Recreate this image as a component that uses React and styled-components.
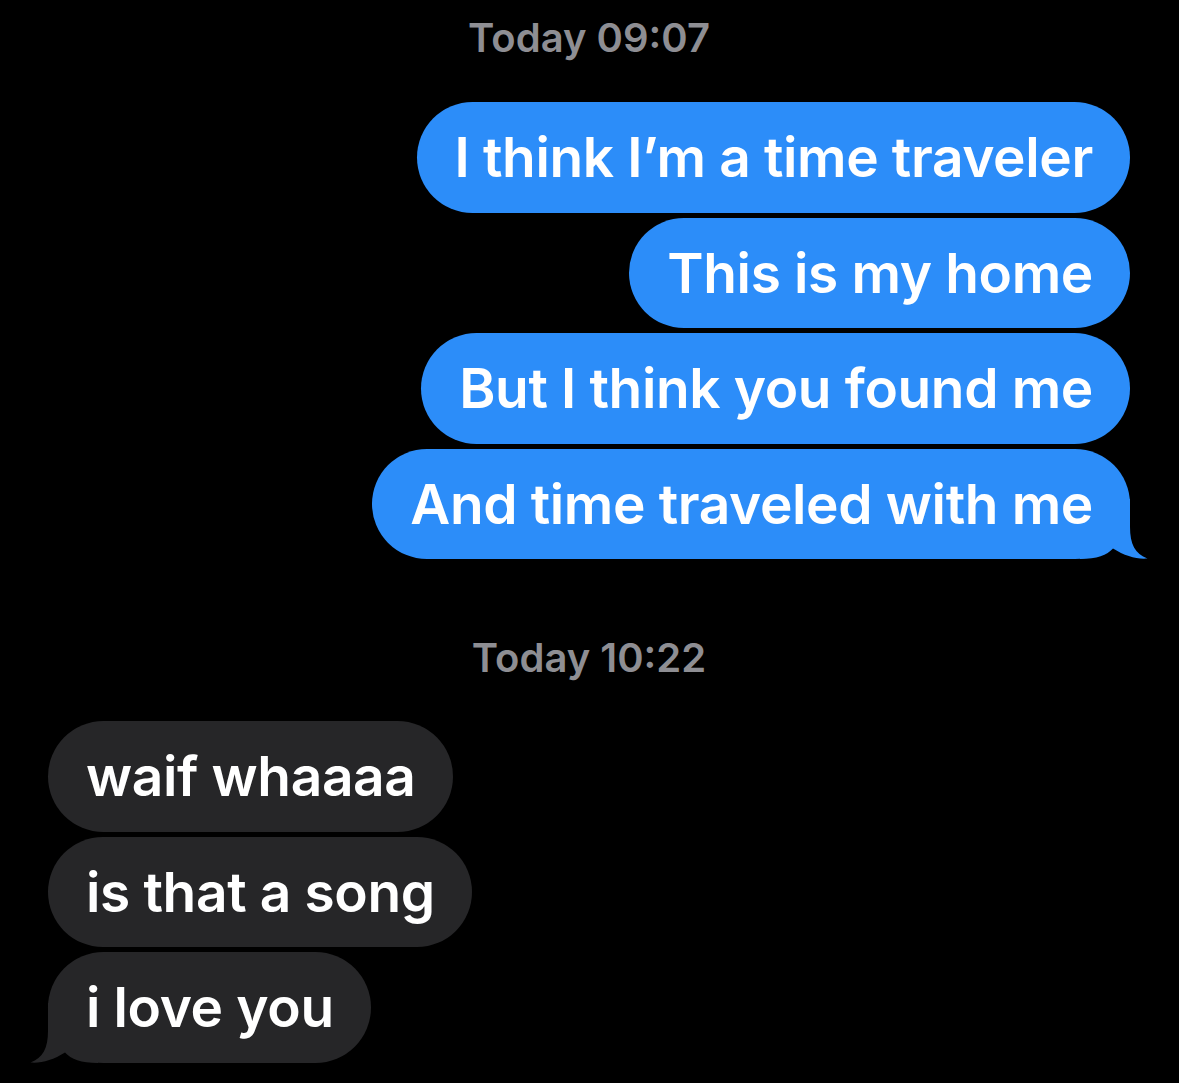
import React from 'react'
import styled, { createGlobalStyle } from 'styled-components'

const Global = createGlobalStyle`
  html, body {
    margin: 0;
    padding: 0;
    background: #000;
  }
  body {
    font-family: Inter, "Noto Sans", sans-serif;
    -webkit-font-smoothing: antialiased;
  }
`

const BLUE = '#2c8df9'
const GRAY = '#262628'

const Page = styled.div`
  width: 1179px;
  height: 1083px;
  background: #000;
  padding: 0 49px 0 48px;
  box-sizing: border-box;
  display: flex;
  flex-direction: column;
  overflow: hidden;
`

const Stamp = styled.div`
  height: 74px;
  margin-top: ${p => p.$top || 0}px;
  display: flex;
  align-items: center;
  justify-content: center;
  color: #8e8e93;
  font-size: 40px;
  font-weight: 600;
`

const Group = styled.div`
  display: flex;
  flex-direction: column;
  align-items: ${p => (p.$mine ? 'flex-end' : 'flex-start')};
  gap: 5px;
  margin-top: ${p => p.$top || 0}px;
`

const Bubble = styled.div`
  position: relative;
  isolation: isolate;
  height: 110.5px;
  box-sizing: border-box;
  padding: 0 37px 0 38px;
  border-radius: 56px;
  display: flex;
  align-items: center;
  background: ${p => (p.$mine ? BLUE : GRAY)};
  color: #fff;
  font-size: 55px;
  font-weight: 600;
  letter-spacing: -0.35px;
  white-space: nowrap;
`

const Tail = styled.svg`
  position: absolute;
  bottom: 0;
  z-index: -1;
  width: 68px;
  height: 60px;
  ${p => (p.$mine ? 'right: -18px;' : 'left: -18px; transform: scaleX(-1);')}
`

function BubbleTail({ mine }) {
  return (
    <Tail $mine={mine} viewBox="0 0 68 60">
      <path
        d="M0 0 H50 V28 C50 45 55 55 67.5 59.5 C57 60.5 45 57 33 49.5 C27 56 17 60 0 60 Z"
        fill={mine ? BLUE : GRAY}
      />
    </Tail>
  )
}

const sent = [
  'I think I\u2019m a time traveler',
  'This is my home',
  'But I think you found me',
  'And time traveled with me',
]

const received = ['waif whaaaa', 'is that a song', 'i love you']

export default function App() {
  return (
    <>
      <Global />
      <Page>
        <Stamp>Today 09:07</Stamp>
        <Group $mine $top={28}>
          {sent.map((t, i) => (
            <Bubble $mine key={t}>
              {t}
              {i === sent.length - 1 && <BubbleTail mine />}
            </Bubble>
          ))}
        </Group>
        <Stamp $top={61}>Today 10:22</Stamp>
        <Group $top={27}>
          {received.map((t, i) => (
            <Bubble key={t}>
              {t}
              {i === received.length - 1 && <BubbleTail />}
            </Bubble>
          ))}
        </Group>
      </Page>
    </>
  )
}
